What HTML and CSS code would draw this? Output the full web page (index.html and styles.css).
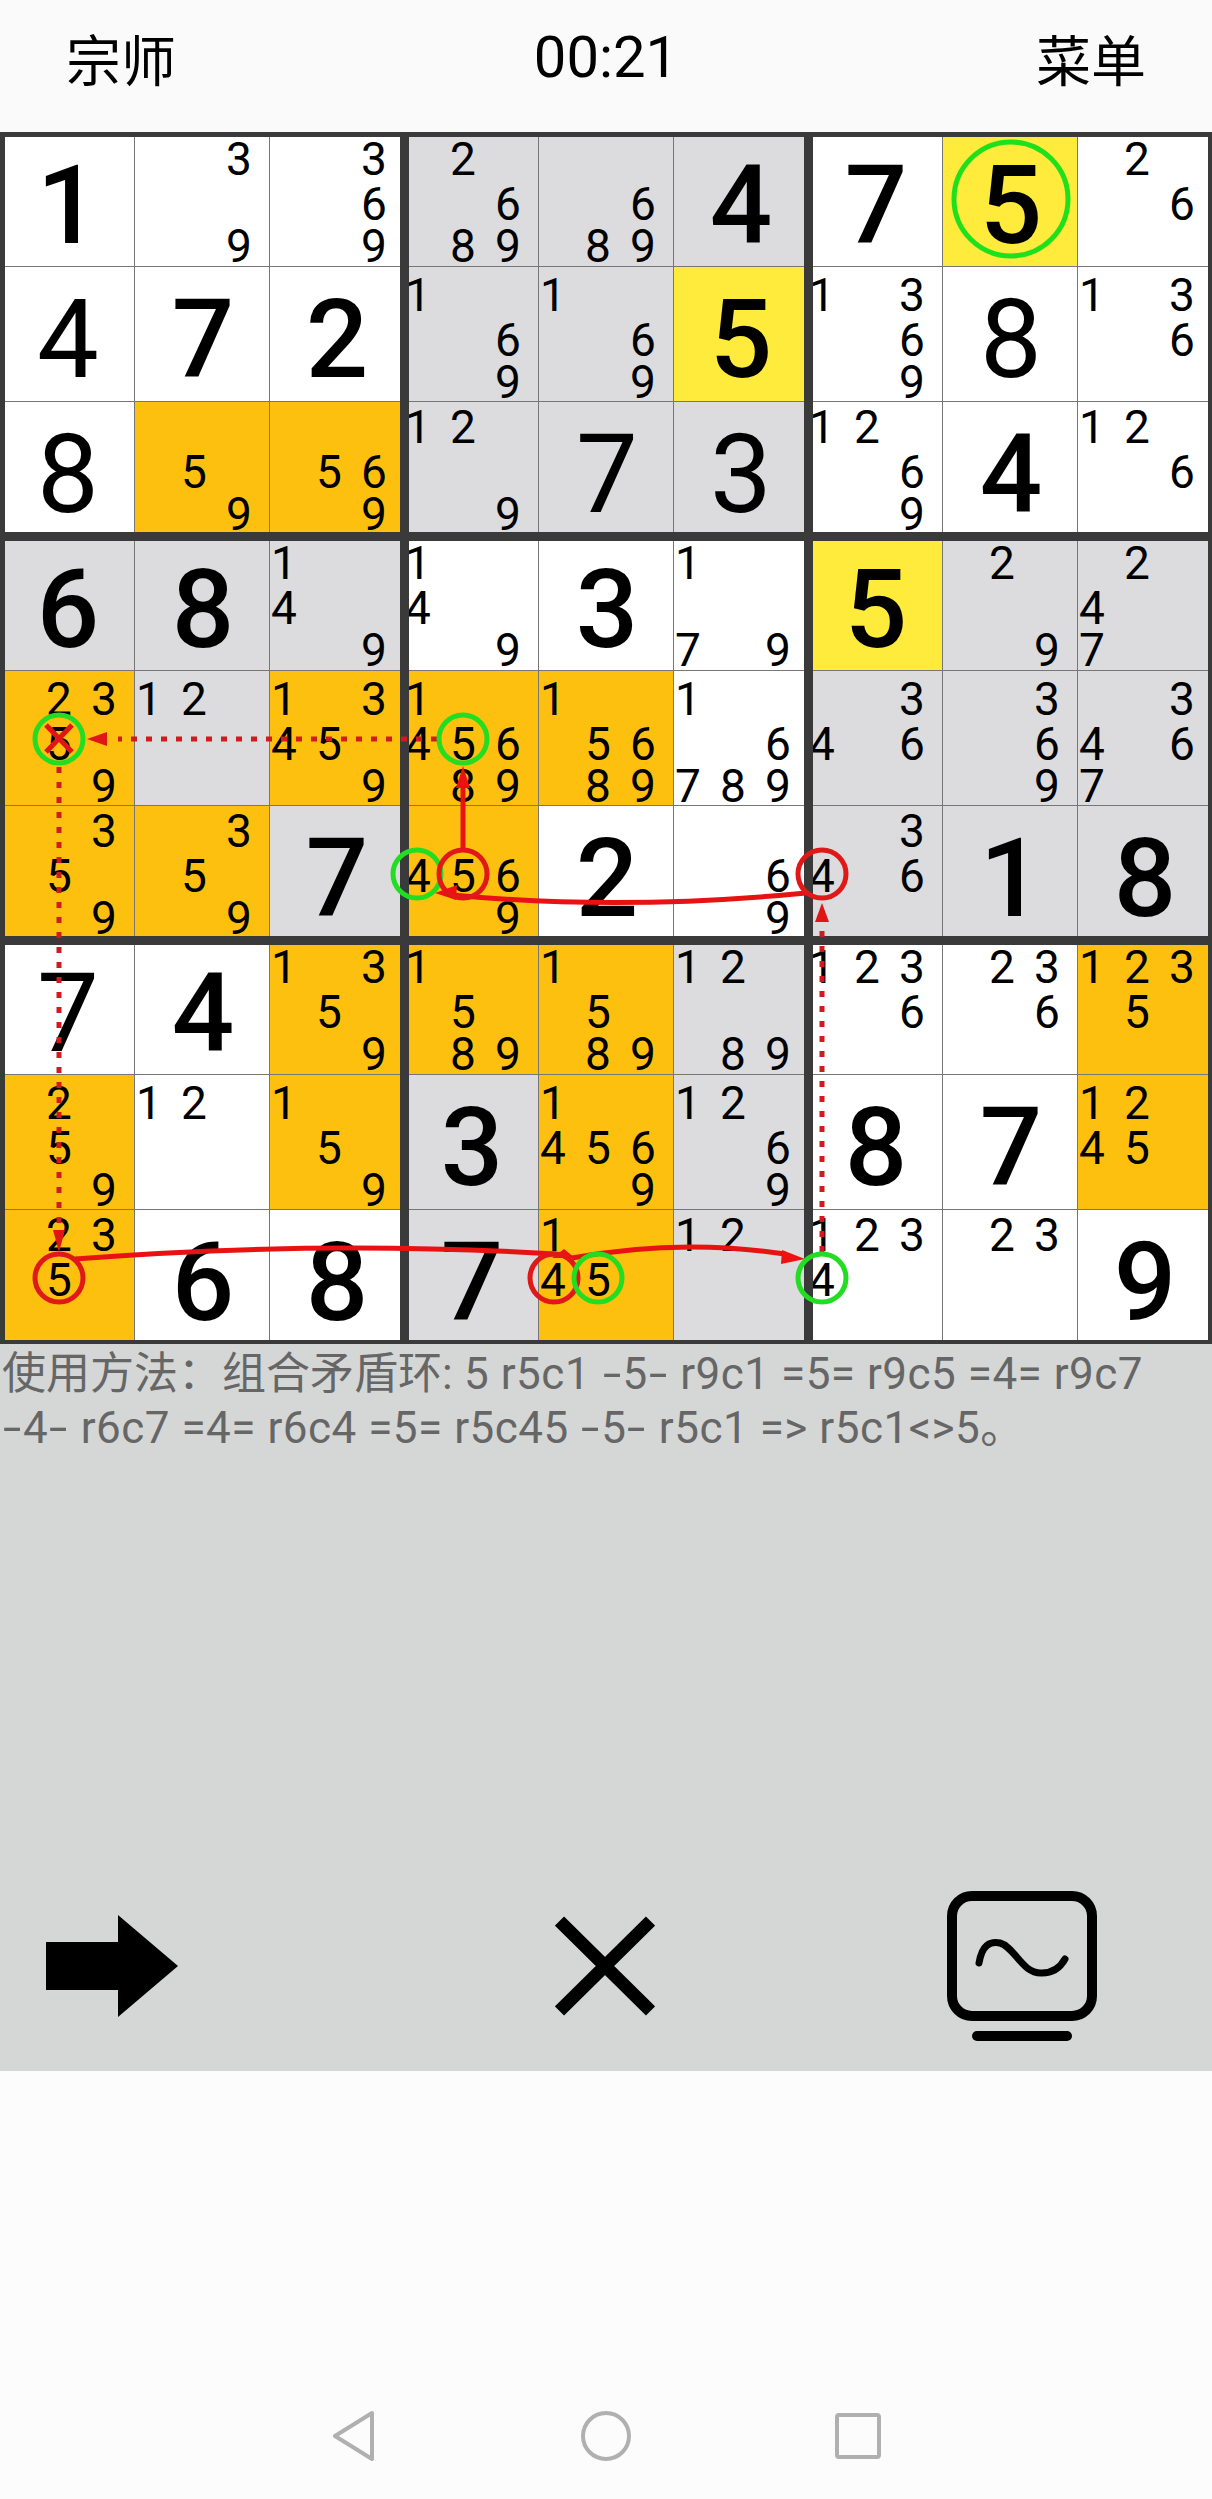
FILE: index.html
```html
<!DOCTYPE html>
<html lang="zh-CN">
<head>
  <meta charset="UTF-8">
  <meta name="viewport" content="width=device-width, initial-scale=1.0">
  <title>宗师</title>
  <link rel="stylesheet" href="styles.css">
</head>
<body>

<header class="topbar">
  <span>宗师</span>
  <span class="timer">00:21</span>
  <span>菜单</span>
</header>

<section class="board" id="board">
  <svg class="overlay" viewBox="0 132 1212 1212" width="1212" height="1212">
    <!-- strong links -->
    <path class="link" d="M463 848V782"/>
    <polygon class="head" points="463,766 456,788 470,788"/>
    <path class="link" d="M806 893Q620 911 452 895"/>
    <polygon class="head" points="435,893 457,885 456,900"/>
    <path class="link" d="M75 1259Q320 1240 556 1254"/>
    <polygon class="head" points="564,1249 552,1258 575,1258"/>
    <path class="link" d="M572 1258Q680 1238 785 1254"/>
    <polygon class="head" points="805,1259 782,1250 781,1264"/>
    <!-- weak links -->
    <path class="dots" d="M437 739H118"/>
    <polygon class="head dark" points="87,739 107,732 107,746"/>
    <path class="dots" d="M59 767V1226"/>
    <polygon class="head dark" points="59,1252 53,1230 65,1230"/>
    <path class="dots" d="M822 1252V926"/>
    <polygon class="head dark" points="822,903 815,922 829,922"/>
    <!-- marks -->
    <circle class="ring big" cx="1011" cy="199" r="57"/>
    <circle class="ring" cx="59" cy="739" r="24"/>
    <circle class="ring" cx="463" cy="739" r="24"/>
    <circle class="ring" cx="417" cy="874" r="24"/>
    <circle class="ring red" cx="463" cy="874" r="24"/>
    <circle class="ring red" cx="822" cy="874" r="24"/>
    <circle class="ring red" cx="59" cy="1278" r="24"/>
    <circle class="ring red" cx="554" cy="1278" r="24"/>
    <circle class="ring" cx="598" cy="1278" r="24"/>
    <circle class="ring" cx="822" cy="1278" r="24"/>
    <path class="cross" d="M46 725L72 752M72 725L46 752"/>
  </svg>
</section>

<section class="panel">
  <p class="note"><span class="cn">使用方法：组合矛盾环:</span> 5 r5c1 <span class="dash">-</span>5<span class="dash">-</span> r9c1 =5= r9c5 =4= r9c7<br><span class="dash">-</span>4<span class="dash">-</span> r6c7 =4= r6c4 =5= r5c45 <span class="dash">-</span>5<span class="dash">-</span> r5c1 =&gt; r5c1&lt;&gt;5<span class="cn">。</span></p>
  <div class="tools">
    <svg width="132" height="102" viewBox="46 1915 132 102">
      <polygon points="46,1942 118,1942 118,1915 178,1966 118,2017 118,1990 46,1990"/>
    </svg>
    <svg width="100" height="100" viewBox="555 1916 100 100">
      <path class="x" d="M559.5 1921L650.5 2011M650.5 1921L559.5 2011"/>
    </svg>
    <svg width="150" height="150" viewBox="947 1891 150 150">
      <rect class="screen" x="952" y="1896" width="140" height="120" rx="20"/>
      <rect x="972" y="2031" width="100" height="10" rx="5"/>
      <path class="wave" d="M979 1963C982 1945 990 1941 1000 1943C1015 1947 1022 1974 1042 1973C1053 1973 1060 1968 1065 1959"/>
    </svg>
  </div>
</section>

<footer class="navbar">
  <svg width="42" height="50" viewBox="333 2412 42 50">
    <path d="M372 2414L335 2437L372 2460Z"/>
  </svg>
  <svg width="50" height="52" viewBox="581 2410 50 52">
    <circle cx="606" cy="2436" r="23"/>
  </svg>
  <svg width="46" height="46" viewBox="835 2413 46 46">
    <rect x="837" y="2415" width="42" height="42" rx="2"/>
  </svg>
</footer>

<script>
// "=n" solved big digit, "~n" lighter big digit, otherwise pencil marks
const cells = [
  "=1", "39", "369",   "2689", "689", "=4",   "=7", "=5", "26",
  "~4", "=7", "=2",    "169", "169", "=5",    "1369", "~8", "136",
  "~8", "59", "569",   "129", "~7", "~3",     "1269", "=4", "126",

  "=6", "=8", "149",   "149", "=3", "179",    "=5", "29", "247",
  "2359", "12", "13459", "145689", "15689", "16789", "346", "369", "3467",
  "359", "359", "=7",  "4569", "=2", "69",    "346", "=1", "=8",

  "~7", "=4", "1359",  "1589", "1589", "1289", "1236", "236", "1235",
  "259", "12", "159",  "=3", "14569", "1269", "=8", "=7", "1245",
  "235", "=6", "=8",   "=7", "145", "12",     "1234", "23", "=9"
];

const colours = [
  "www", "ggg", "wyw",
  "www", "ggy", "www",
  "woo", "ggg", "www",
  "ggg", "www", "ygg",
  "ogo", "oow", "ggg",
  "oog", "oww", "ggg",
  "wwo", "oog", "wwo",
  "owo", "gog", "wwo",
  "oww", "gog", "www"
].join("");

const board = document.getElementById("board");
const overlay = board.querySelector(".overlay");

for (let b = 0; b < 9; b++) {
  const box = document.createElement("div");
  box.className = "box";

  for (let i = 0; i < 9; i++) {
    const row = Math.floor(b / 3) * 3 + Math.floor(i / 3);
    const col = (b % 3) * 3 + i % 3;
    const value = cells[row * 9 + col];
    const cell = document.createElement("div");
    cell.className = `cell bg-${colours[row * 9 + col]} row-${row % 3} col-${col % 3}`;

    if (value[0] === "=" || value[0] === "~") {
      cell.classList.add("given");
      if (value[0] === "~") cell.classList.add("light");
      cell.textContent = value[1];
    } else {
      const marks = document.createElement("div");
      marks.className = "marks";
      marks.innerHTML = [...value].map((d) => `<span class="p${d}">${d}</span>`).join("");
      cell.appendChild(marks);
    }
    box.appendChild(cell);
  }
  board.insertBefore(box, overlay);
}
</script>

</body>
</html>
```

FILE: styles.css
```css
body {
  margin: 0;
  width: 1212px;
  height: 2499px;
  display: flex;
  flex-direction: column;
  font-family: Roboto, "Noto Sans CJK SC", sans-serif;
  background: #fbfcfb;
  color: #000;
}

/* top bar */
.topbar {
  height: 132px;
  padding: 0 66px 18px;
  box-sizing: border-box;
  display: flex;
  justify-content: space-between;
  align-items: center;
  background: #fafafa;
  font-size: 55px;
}
.timer {
  font-size: 58px;
}

/* board */
.board {
  position: relative;
  height: 1212px;
  box-sizing: border-box;
  padding: 5px 4px 4px 5px;
  display: grid;
  grid-template-columns: repeat(3, 395px);
  grid-template-rows: repeat(3, 395px);
  gap: 9px;
  background: #3a3a3a;
}
.box {
  display: grid;
  grid-template-columns: 129px 134px 130px;
  grid-template-rows: 129px 134px 130px;
  gap: 1px;
  background: #777;
}
.cell {
  overflow: hidden;
  min-width: 0;
  min-height: 0;
}
.bg-w { background: #fff; }
.bg-g { background: #dcdbdd; }
.bg-o { background: #fec00f; }
.bg-y { background: #ffeb3b; }

.marks {
  display: grid;
  grid-template-rows: 44px 46px 38px;
  font-size: 46px;
  line-height: 1;
  place-items: center;
}
.col-0 .marks { grid-template-columns: 18px 72px 18px; }
.col-1 .marks, .col-2 .marks { grid-template-columns: 28px 62px 28px; }
.row-1 .marks { padding-top: 6px; }
.row-2 .marks { padding-top: 3px; }

.p1 { grid-area: 1 / 1; }
.p2 { grid-area: 1 / 2; }
.p3 { grid-area: 1 / 3; }
.p4 { grid-area: 2 / 1; }
.p5 { grid-area: 2 / 2; }
.p6 { grid-area: 2 / 3; }
.p7 { grid-area: 3 / 1; }
.p8 { grid-area: 3 / 2; }
.p9 { grid-area: 3 / 3; }

.given {
  box-sizing: border-box;
  display: flex;
  justify-content: center;
  align-items: center;
  font-size: 110px;
  font-weight: 500;
  line-height: 1;
}
.given.light { font-weight: 400; }
.given.row-0 { padding-top: 8px; }
.given.row-1 { padding-top: 11px; }
.given.row-2 { padding-top: 16px; }
.given.col-0 { padding-right: 3px; }
.given.col-1 { padding-left: 2px; }
.given.col-2 { padding-left: 4px; }

/* chain drawn over the grid */
.overlay {
  position: absolute;
  top: 0;
  left: 0;
  fill: none;
}
.link {
  stroke: #e81212;
  stroke-width: 5;
  fill: none;
}
.dots {
  stroke: #cf1a1f;
  stroke-width: 5;
  stroke-dasharray: 6 9;
  fill: none;
}
.head { fill: #ee1111; }
.head.dark { fill: #e01515; }
.ring {
  stroke: #22dd22;
  stroke-width: 5;
  fill: none;
}
.ring.big { stroke: #1fe01c; }
.ring.red { stroke: #e01818; }
.cross {
  stroke: #e01515;
  stroke-width: 5;
  fill: none;
}

/* hint panel */
.panel {
  height: 727px;
  box-sizing: border-box;
  display: flex;
  flex-direction: column;
  background: #d5d7d6;
}
.note {
  margin: 0;
  padding: 3px 0 0 2px;
  font-size: 44px;
  line-height: 54px;
  letter-spacing: 0.5px;
  color: #666;
  white-space: nowrap;
}
.note .cn { letter-spacing: 0; }
/* the hyphen is longer in the app's font */
.note .dash {
  display: inline-block;
  width: 21px;
  text-align: center;
  transform: scaleX(1.5);
}
.tools {
  margin-top: auto;
  padding: 0 0 30px 46px;
  display: grid;
  grid-template-columns: 509px 392px 1fr;
  align-items: center;
}
.tools svg { display: block; }
.x {
  stroke: #000;
  stroke-width: 13;
  fill: none;
}
.screen {
  fill: none;
  stroke: #000;
  stroke-width: 10;
}
.wave {
  fill: none;
  stroke: #000;
  stroke-width: 7;
  stroke-linecap: round;
}

/* android nav buttons */
.navbar {
  margin-top: auto;
  padding: 0 0 37px 333px;
  display: grid;
  grid-template-columns: 248px 254px 1fr;
  align-items: center;
}
.navbar svg {
  display: block;
  fill: none;
  stroke: #b0b0b0;
  stroke-width: 4;
  stroke-linejoin: round;
}
```
